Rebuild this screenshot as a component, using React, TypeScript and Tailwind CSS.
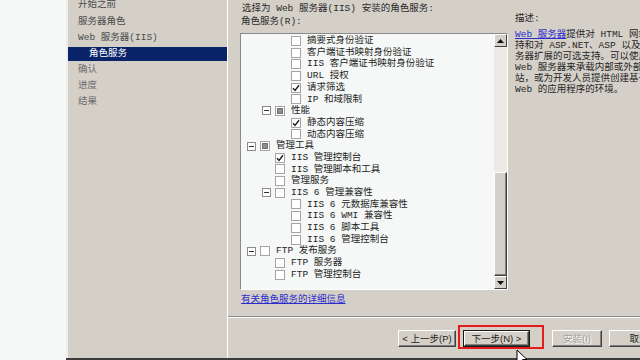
type CheckState = 'off' | 'on' | 'mixed';

type Row = {
  label: string;
  level: 0 | 1 | 2;
  state: CheckState;
  expander?: boolean;
};

const rows: Row[] = [
  { label: '摘要式身份验证', level: 2, state: 'off' },
  { label: '客户端证书映射身份验证', level: 2, state: 'off' },
  { label: 'IIS 客户端证书映射身份验证', level: 2, state: 'off' },
  { label: 'URL 授权', level: 2, state: 'off' },
  { label: '请求筛选', level: 2, state: 'on' },
  { label: 'IP 和域限制', level: 2, state: 'off' },
  { label: '性能', level: 1, state: 'mixed', expander: true },
  { label: '静态内容压缩', level: 2, state: 'on' },
  { label: '动态内容压缩', level: 2, state: 'off' },
  { label: '管理工具', level: 0, state: 'mixed', expander: true },
  { label: 'IIS 管理控制台', level: 1, state: 'on' },
  { label: 'IIS 管理脚本和工具', level: 1, state: 'off' },
  { label: '管理服务', level: 1, state: 'off' },
  { label: 'IIS 6 管理兼容性', level: 1, state: 'off', expander: true },
  { label: 'IIS 6 元数据库兼容性', level: 2, state: 'off' },
  { label: 'IIS 6 WMI 兼容性', level: 2, state: 'off' },
  { label: 'IIS 6 脚本工具', level: 2, state: 'off' },
  { label: 'IIS 6 管理控制台', level: 2, state: 'off' },
  { label: 'FTP 发布服务', level: 0, state: 'off', expander: true },
  { label: 'FTP 服务器', level: 1, state: 'off' },
  { label: 'FTP 管理控制台', level: 1, state: 'off' },
];

const indent = ['pl-[6px]', 'pl-[21px]', 'pl-[37px]'];

const steps = [
  { label: '开始之前', done: true },
  { label: '服务器角色', done: true },
  { label: 'Web 服务器(IIS)', done: true },
  { label: '角色服务', active: true },
  { label: '确认' },
  { label: '进度' },
  { label: '结果' },
];

function Check({ state }: { state: CheckState }) {
  return (
    <span className="w-[10px] h-[10px] border border-[#a4a4a4] bg-white flex items-center justify-center shrink-0">
      {state === 'on' && (
        <svg width="8" height="8" viewBox="0 0 8 8">
          <path d="M1 4.2 L3 6.4 L7 1.3" stroke="#1e1e1e" strokeWidth="1.4" fill="none" />
        </svg>
      )}
      {state === 'mixed' && <span className="w-[6px] h-[6px] bg-[#8f8f8f] border border-[#707070]" />}
    </span>
  );
}

function Expander() {
  return (
    <span className="w-[9px] h-[9px] border border-[#8c8c8c] bg-white flex items-center justify-center">
      <span className="w-[5px] h-px bg-[#333]" />
    </span>
  );
}

function WinButton({
  children,
  width,
  isDefault,
  disabled,
}: {
  children: React.ReactNode;
  width: string;
  isDefault?: boolean;
  disabled?: boolean;
}) {
  return (
    <div className={`${width} h-[17px] shrink-0 ${isDefault ? 'border border-[#1a1a1a]' : ''}`}>
      <div className="h-full border border-t-white border-l-white border-r-[#404040] border-b-[#404040] shadow-[inset_-1px_-1px_0_#808080] flex items-center justify-center">
        <span
          className={`whitespace-nowrap font-['Liberation_Sans','Noto_Sans_CJK_SC',sans-serif] ${
            disabled ? 'text-[#a2a09a] [text-shadow:1px_1px_0_#fff]' : 'text-[#1c1c1c]'
          }`}
        >
          {children}
        </span>
      </div>
    </div>
  );
}

export default function App() {
  return (
    <div className="relative w-[640px] h-[360px] overflow-hidden flex bg-[#f5f8f6] font-['Liberation_Mono','Noto_Sans_CJK_SC',monospace] text-[9.5px] leading-none">
      {/* desktop strip */}
      <div className="w-[66px] shrink-0" />

      <div className="flex-1 flex flex-col">
        <div className="h-[358px] flex bg-[#d4d0c8]">
          {/* step nav */}
          <div className="w-[162px] shrink-0 border-l-2 border-l-[#efeeea] border-r border-r-white flex flex-col">
            <div className="-mt-[3px]">
              {steps.map((s) => (
                <div key={s.label} className="h-[16.2px] flex items-center">
                  {s.active ? (
                    <div className="w-full h-[14px] bg-[#0a246a] flex items-center pl-[21px] text-white">
                      {s.label}
                    </div>
                  ) : (
                    <span className={`pl-[10px] ${s.done ? 'text-[#4a4a4a]' : 'text-[#6e6e6e]'}`}>{s.label}</span>
                  )}
                </div>
              ))}
            </div>
          </div>

          {/* content */}
          <div className="flex-1 flex flex-col">
            <div className="h-[316px] flex pl-[12px]">
              <div className="w-[268px] shrink-0 flex flex-col">
                <div className="mt-[2px] h-[13px] flex items-center pl-[2px] text-[#2a2a2a] whitespace-nowrap">
                  选择为 Web 服务器(IIS) 安装的角色服务:
                </div>
                <div className="h-[13px] flex items-center pl-[1px] text-[#2a2a2a]">角色服务(R):</div>

                {/* tree list */}
                <div className="mt-[5px] h-[257px] flex border border-t-[#8a8a8a] border-l-[#8a8a8a] border-r-white border-b-white bg-[#f5f8f6]">
                  <div className="flex-1 pt-px overflow-hidden text-[#1f1f1f]">
                    {rows.map((r) => (
                      <div key={r.label} className={`h-[11.7px] flex items-center ${indent[r.level]}`}>
                        <span className="w-[13px] shrink-0 flex items-center">{r.expander && <Expander />}</span>
                        <Check state={r.state} />
                        <span className="ml-[6px] whitespace-nowrap">{r.label}</span>
                      </div>
                    ))}
                  </div>

                  {/* scrollbar */}
                  <div className="w-[13px] shrink-0 flex flex-col bg-[#ebeae6]">
                    <div className="h-[13px] bg-[#d4d0c8] border border-t-white border-l-white border-r-[#404040] border-b-[#404040] flex items-center justify-center">
                      <svg width="7" height="4" viewBox="0 0 7 4">
                        <path d="M3.5 0 L7 4 L0 4 Z" fill="#111" />
                      </svg>
                    </div>
                    <div className="flex-1" />
                    <div className="h-[104px] bg-[#d4d0c8] border border-t-white border-l-white border-r-[#404040] border-b-[#404040] shadow-[inset_-1px_-1px_0_#808080]" />
                    <div className="h-[13px] bg-[#d4d0c8] border border-t-white border-l-white border-r-[#404040] border-b-[#404040] flex items-center justify-center">
                      <svg width="7" height="4" viewBox="0 0 7 4">
                        <path d="M0 0 L7 0 L3.5 4 Z" fill="#111" />
                      </svg>
                    </div>
                  </div>
                </div>

                <div className="mt-[3px] h-[13px] flex items-center pl-[1px]">
                  <span className="text-[#2d2dcc] underline">有关角色服务的详细信息</span>
                </div>
              </div>

              {/* description */}
              <div className="ml-[7px] flex-1 overflow-hidden pt-[12px] text-[#262626] whitespace-nowrap">
                <div className="h-[13px] flex items-center">描述:</div>
                <div className="mt-[4px] leading-[11px]">
                  <div>
                    <span className="text-[#2d2dcc] underline">Web 服务器</span>提供对 HTML 网站的支
                  </div>
                  <div>持和对 ASP.NET、ASP 以及 Web 服</div>
                  <div>务器扩展的可选支持。可以使用</div>
                  <div>Web 服务器来承载内部或外部网</div>
                  <div>站，或为开发人员提供创建基于</div>
                  <div>Web 的应用程序的环境。</div>
                </div>
              </div>
            </div>

            {/* separator */}
            <div className="h-px bg-[#8e8c86]" />
            <div className="h-px bg-white" />

            {/* buttons */}
            <div className="flex gap-[7px] pl-[170px] pt-[12px]">
              <WinButton width="w-[58px]">&lt; 上一步(P)</WinButton>
              <WinButton width="w-[67px]" isDefault>
                下一步(N) &gt;
              </WinButton>
              <div className="w-[8px] shrink-0" />
              <WinButton width="w-[50px]" disabled>
                安装(I)
              </WinButton>
              <WinButton width="w-[60px]">取消</WinButton>
            </div>
          </div>
        </div>
        <div className="h-[2px] bg-[#3c3c3c]" />
      </div>

      {/* highlight annotation */}
      <div className="absolute left-[458px] top-[325px] w-[86px] h-[24px] border-2 border-[#e41b1b]" />

      {/* mouse cursor */}
      <svg className="absolute left-[516px] top-[349px]" width="12" height="18" viewBox="0 0 12 18">
        <path d="M1 1 L1 15 L4.5 11.5 L7 17 L9 16 L6.5 10.5 L11 10.5 Z" fill="#fff" stroke="#000" strokeWidth="1" />
      </svg>
    </div>
  );
}
